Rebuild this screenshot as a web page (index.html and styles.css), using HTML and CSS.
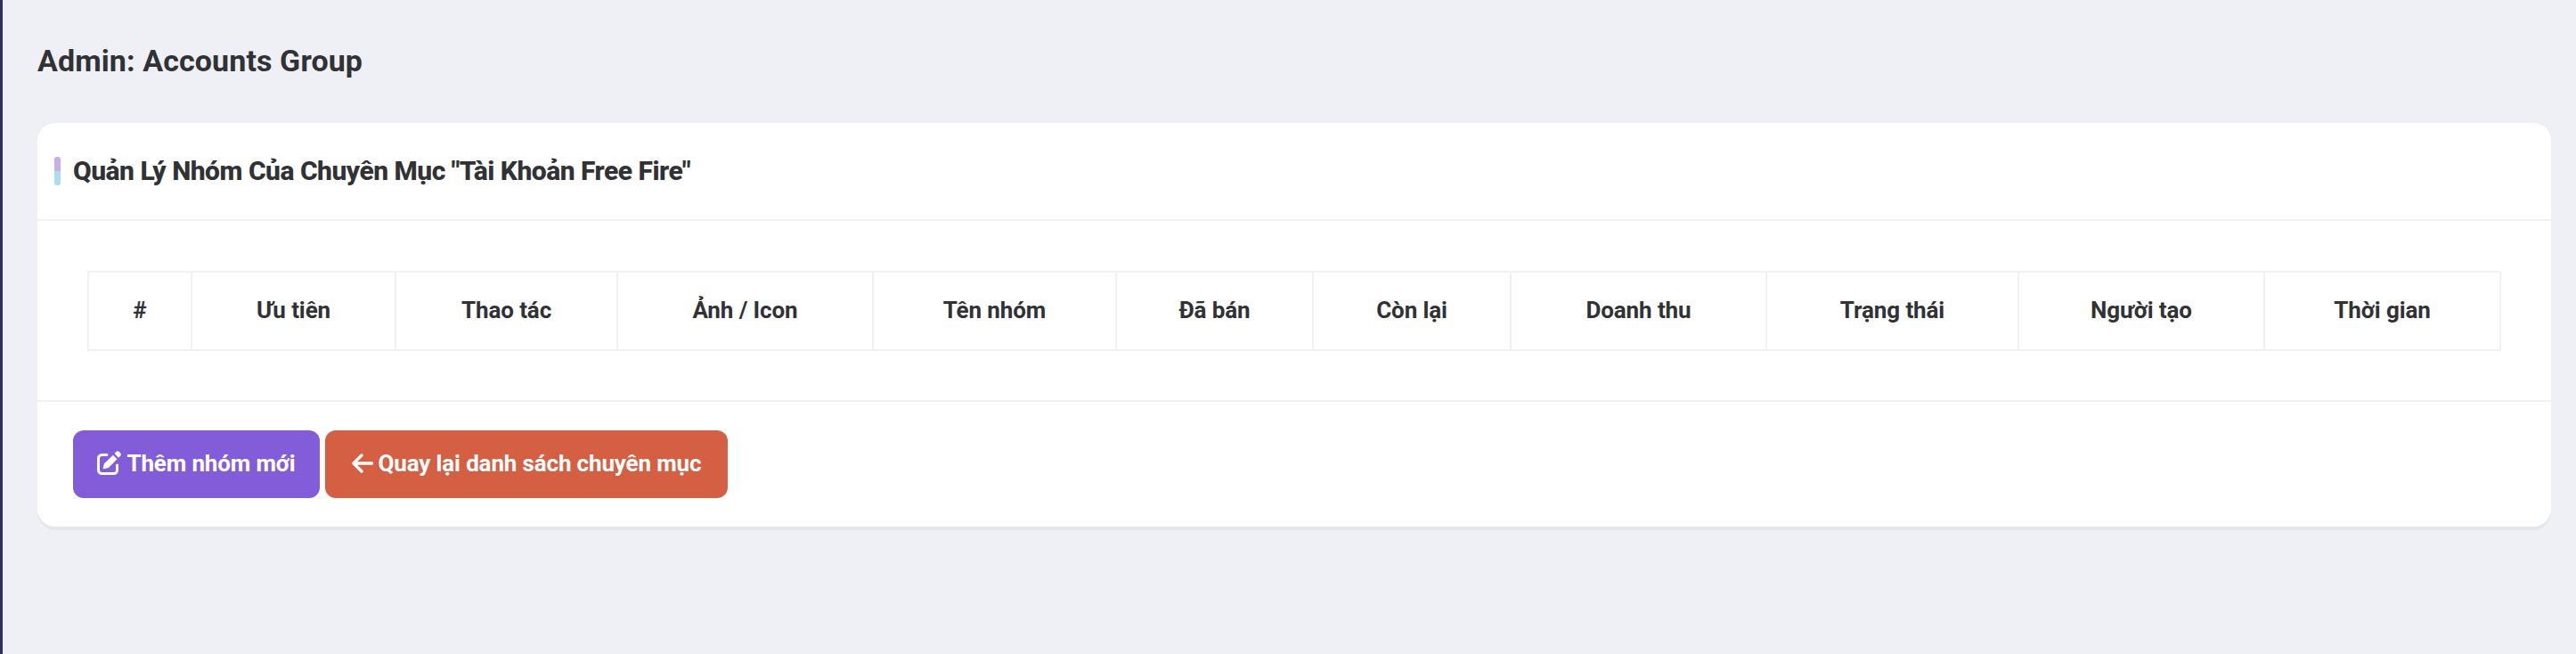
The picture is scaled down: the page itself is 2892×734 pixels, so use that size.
FILE: index.html
```html
<!DOCTYPE html>
<html lang="vi">
<head>
<meta charset="utf-8">
<title>Admin: Accounts Group</title>
<link rel="stylesheet" href="styles.css">
</head>
<body>
<main class="page">
  <h1 class="page-title">Admin: Accounts Group</h1>
  <section class="card">
    <header class="card-header">
      <span class="accent"></span>
      <h2 class="card-title">Quản Lý Nhóm Của Chuyên Mục "Tài Khoản Free Fire"</h2>
    </header>
    <div class="card-body">
      <table class="data-table">
        <thead>
          <tr>
            <th class="c1">#</th>
            <th class="c2">Ưu tiên</th>
            <th class="c3">Thao tác</th>
            <th class="c4">Ảnh / Icon</th>
            <th class="c5">Tên nhóm</th>
            <th class="c6">Đã bán</th>
            <th class="c7">Còn lại</th>
            <th class="c8">Doanh thu</th>
            <th class="c9">Trạng thái</th>
            <th class="c10">Người tạo</th>
            <th class="c11">Thời gian</th>
          </tr>
        </thead>
      </table>
    </div>
    <footer class="card-footer">
      <a class="btn btn-purple" href="#">
        <svg class="icon-edit" viewBox="0 0 27 27" aria-hidden="true">
          <path class="ico-line" d="M11 4.500H5.500A4 4 0 0 0 1.500 8.500V21.500A4 4 0 0 0 5.500 25.500H18.500A4 4 0 0 0 22.500 21.500V16"/>
          <path class="ico-fill" d="M21.300 1.300a2.600 2.600 0 0 1 3.700 0l.9.9a2.600 2.600 0 0 1 0 3.700l-1.800 1.800-4.600-4.600zM17.900 4.700l4.600 4.600-9.400 9.400c-.3.300-.7.500-1.100.6l-4.300 1a.8.8 0 0 1-1-1l1-4.300c.1-.4.300-.8.600-1.100z"/>
        </svg>
        Thêm nhóm mới
      </a>
      <a class="btn btn-orange" href="#">
        <svg class="icon-arrow" viewBox="0 0 24 22" aria-hidden="true">
          <path class="ico-arrow" d="M22.500 11H2M11 2 2 11l9 9"/>
        </svg>
        Quay lại danh sách chuyên mục
      </a>
    </footer>
  </section>
</main>
</body>
</html>
```
FILE: styles.css
```css
* { box-sizing: border-box; }
html, body { margin: 0; height: 100%; }
body {
  background: #eff0f6;
  border-left: 3px solid #2b2f5f;
  font-family: Roboto, "Noto Sans", sans-serif;
  color: #313235;
  overflow: hidden;
}
.page { padding: 44px 28px 0 39px; }
.page-title {
  margin: 0 0 46px;
  font-size: 34px;
  line-height: 48px;
  font-weight: 700;
  letter-spacing: 0.1px;
}
.card {
  background: #fff;
  border-radius: 20px;
  box-shadow: 0 4px 0 #e5e6ee;
}
.card-header {
  display: flex;
  align-items: center;
  gap: 14px;
  height: 110px;
  padding-left: 19px;
  border-bottom: 2px solid #f1f1f4;
}
.accent {
  width: 7px;
  height: 32px;
  border-radius: 3px;
  background: linear-gradient(#c5b0ee 50%, #aedcf0 50%);
}
.card-title {
  margin: 0;
  font-size: 30px;
  line-height: 44px;
  font-weight: 800;
  letter-spacing: -0.5px;
}
.card-body {
  padding: 56px 56px 55px;
  border-bottom: 2px solid #f1f1f4;
}
.data-table {
  width: 100%;
  table-layout: fixed;
  border-collapse: collapse;
}
.data-table th {
  height: 88px;
  padding: 0 0 2px;
  border: 2px solid #f1f1f4;
  font-size: 26px;
  font-weight: 700;
  text-align: center;
  letter-spacing: -0.1px;
}
.c1 { width: 116px; }
.c2 { width: 229px; }
.c3 { width: 249px; }
.c4 { width: 287px; }
.c5 { width: 273px; }
.c6 { width: 221px; }
.c7 { width: 222px; }
.c8 { width: 287px; }
.c9 { width: 283px; }
.c10 { width: 276px; }
.c11 { width: 265px; }
.card-footer {
  display: flex;
  gap: 6px;
  padding: 32px 40px;
}
.btn {
  display: flex;
  align-items: center;
  justify-content: center;
  gap: 6px;
  height: 76px;
  padding-bottom: 3px;
  border-radius: 12px;
  color: #fff;
  font-size: 26px;
  font-weight: 700;
  letter-spacing: -0.15px;
  text-decoration: none;
  white-space: nowrap;
}
.btn-purple { width: 277px; background: #835cd9; }
.btn-orange { width: 452px; background: #d45f43; }
.icon-edit { width: 27px; height: 27px; flex: none; }
.icon-arrow { width: 24px; height: 22px; flex: none; }
.ico-line { fill: none; stroke: #fff; stroke-width: 3; stroke-linecap: round; }
.ico-fill { fill: #fff; }
.ico-arrow { fill: none; stroke: #fff; stroke-width: 3.4; stroke-linecap: round; stroke-linejoin: round; }
```
